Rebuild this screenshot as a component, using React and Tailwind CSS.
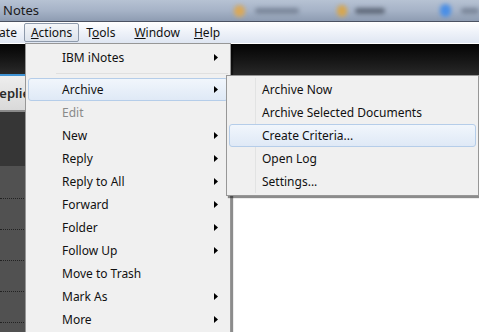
import React from 'react';

const Arrow = () => (
  <svg width="4" height="7" viewBox="0 0 4 7" className="shrink-0">
    <path d="M0 0 L4 3.5 L0 7 Z" fill="#000" />
  </svg>
);

const mainItems = [
  { label: 'Edit', disabled: true },
  { label: 'New', sub: true },
  { label: 'Reply', sub: true },
  { label: 'Reply to All', sub: true },
  { label: 'Forward', sub: true },
  { label: 'Folder', sub: true },
  { label: 'Follow Up', sub: true },
  { label: 'Move to Trash' },
  { label: 'Mark As', sub: true },
  { label: 'More', sub: true },
];

const archiveItems = ['Archive Now', 'Archive Selected Documents', 'Create Criteria...', 'Open Log', 'Settings...'];

const MenuRow = ({ label, sub, disabled, active, inset }) => (
  <div
    className={`h-[23px] flex items-center pr-[9px] mx-[2px] rounded-[3px] border ${inset ? 'pl-[32px]' : 'pl-[33px]'} ${
      active ? 'border-[#b5cde9] bg-gradient-to-b from-[#f1f6fc] to-[#dfe9f6]' : 'border-transparent'
    }`}
  >
    <span className={`flex-1 ${disabled ? 'text-[#8a8a8a]' : 'text-[#111]'}`}>{label}</span>
    {sub && <Arrow />}
  </div>
);

const TopItem = ({ children, active }) => (
  <div
    className={`h-[19px] flex items-center px-[6px] border rounded-[2px] ${
      active ? 'border-[#8e9aab] bg-gradient-to-b from-[#f4f6f9] to-[#dde3ec]' : 'border-transparent'
    }`}
  >
    {children}
  </div>
);

export default function App() {
  return (
    <div className="relative w-[479px] h-[332px] overflow-hidden bg-white font-['Noto_Sans',sans-serif] text-[12px] leading-none text-[#111]">
      {/* title bar */}
      <div className="h-[21px] flex items-center bg-gradient-to-b from-[#b6c2d3] via-[#a6b3c7] to-[#8e9cb2]">
        <span className="pl-[3px] text-[13px] text-[#1a1a1a]">Notes</span>
        <div className="ml-[195px] w-[12px] h-[12px] rounded-full bg-[#d9a85a] blur-[2px]" />
        <div className="ml-[10px] w-[50px] h-[6px] rounded bg-[#7b879a] blur-[2px]" />
        <div className="ml-[38px] w-[12px] h-[12px] rounded-full bg-[#d6a650] blur-[2px]" />
        <div className="ml-[8px] w-[34px] h-[6px] rounded bg-[#606a7a] blur-[2px]" />
        <div className="ml-[55px] w-[13px] h-[13px] rounded-full bg-[#4b8fe6] blur-[2px]" />
        <div className="ml-[10px] w-[20px] h-[6px] rounded bg-[#7b879a] blur-[2px]" />
      </div>
      <div className="h-px bg-[#4b5262]" />
      {/* menu bar */}
      <div className="h-[21px] flex items-center bg-gradient-to-b from-[#ffffff] via-[#eef2f9] to-[#dfe6f2]">
        <div className="ml-[-27px]">
          <TopItem>Create</TopItem>
        </div>
        <TopItem active>
          <span><u>A</u>ctions</span>
        </TopItem>
        <TopItem>
          <span>T<u>o</u>ols</span>
        </TopItem>
        <div className="ml-[5px]">
          <TopItem>
            <span><u>W</u>indow</span>
          </TopItem>
        </div>
        <TopItem>
          <span><u>H</u>elp</span>
        </TopItem>
      </div>
      <div className="h-px bg-white" />
      {/* body */}
      <div className="flex h-[289px]">
        <div className="w-[26px] flex flex-col">
          <div className="h-[30px] bg-gradient-to-b from-[#050505] to-[#2a2a2a]" />
          <div className="h-[2px] bg-[#3f93d4]" />
          <div className="h-[34px] flex items-center bg-gradient-to-b from-[#eeeeee] to-[#d9d9d9] overflow-hidden">
            <span className="ml-[-9px] font-semibold text-[13px] text-[#2a2a2a] whitespace-nowrap">Replies</span>
          </div>
          <div className="h-[2px] bg-[#8a8a8a]" />
          <div className="h-[54px] bg-[#363636]" />
          <div className="flex-1 bg-[#515151] flex flex-col pt-[32px] gap-[30px]">
            {[0, 1, 2, 3, 4].map((i) => (
              <div key={i} className="border-t border-dotted border-[#222]" />
            ))}
          </div>
        </div>
        <div className="flex-1 flex flex-col">
          <div className="h-[32px] bg-gradient-to-b from-[#050505] to-[#2a2a2a]" />
          <div className="flex-1 bg-white" />
        </div>
      </div>

      {/* Actions menu */}
      <div className="absolute left-[25px] top-[43px] w-[206px] h-[300px] bg-[#f0f0f0] border border-[#979797] shadow-[2px_2px_1px_rgba(0,0,0,0.45)] pt-[2px]">
        <MenuRow label="IBM iNotes" sub />
        <div className="h-[9px] flex items-center pl-[30px] pr-[2px]">
          <div className="flex-1 h-px bg-[#e0e0e0]" />
        </div>
        <MenuRow label="Archive" sub active />
        {mainItems.map((it) => (
          <MenuRow key={it.label} {...it} />
        ))}
      </div>

      {/* Archive submenu */}
      <div className="absolute left-[226px] top-[75px] w-[253px] h-[121px] bg-[#f0f0f0] border border-[#979797] shadow-[2px_2px_1px_rgba(0,0,0,0.45)] pt-[2px]">
        <div className="absolute left-[28px] top-[2px] bottom-[2px] w-px bg-[#e2e3e3]" />
        <div className="relative">
          {archiveItems.map((label) => (
            <MenuRow key={label} label={label} inset active={label === 'Create Criteria...'} />
          ))}
        </div>
      </div>
    </div>
  );
}
